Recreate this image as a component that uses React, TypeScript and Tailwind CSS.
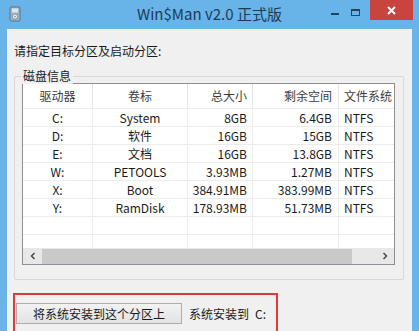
import React from "react";

type Disk = {
  drive: string
  label: string
  size: string
  free: string
  fs: string
};

const disks: Disk[] = [
  { drive: "C:", label: "System", size: "8GB", free: "6.4GB", fs: "NTFS" },
  { drive: "D:", label: "软件", size: "16GB", free: "15GB", fs: "NTFS" },
  { drive: "E:", label: "文档", size: "16GB", free: "13.8GB", fs: "NTFS" },
  { drive: "W:", label: "PETOOLS", size: "3.93MB", free: "1.27MB", fs: "NTFS" },
  { drive: "X:", label: "Boot", size: "384.91MB", free: "383.99MB", fs: "NTFS" },
  { drive: "Y:", label: "RamDisk", size: "178.93MB", free: "51.73MB", fs: "NTFS" },
];

const font = { fontFamily: '"Noto Sans CJK SC", "Noto Sans", sans-serif' };

// column widths: 驱动器 / 卷标 / 总大小 / 剩余空间 / 文件系统
const cols = "grid grid-cols-[70px_95px_65px_86px_72px]";

function AppIcon() {
  return (
    <svg width="12" height="16" viewBox="0 0 12 16">
      <rect x="1" y="1" width="10" height="14" rx="1" fill="#9fb4c6" stroke="#5d7488" />
      <rect x="3" y="2.5" width="6" height="4" fill="#dbe7f1" />
      <circle cx="6" cy="10.5" r="2.6" fill="#e9eef3" stroke="#6d8397" strokeWidth="0.8" />
      <circle cx="6" cy="10.5" r="0.8" fill="#6d8397" />
    </svg>
  );
}

function DiskRow({ d }: { d?: Disk }) {
  return (
    <div className={`${cols} h-[18px] border-b border-[#ececec] text-[12px] leading-[17px] text-[#1a1a1a]`}>
      <div className="text-center border-r border-[#ececec]">{d?.drive}</div>
      <div className="text-center border-r border-[#ececec]">{d?.label}</div>
      <div className="text-right pr-[5px] border-r border-[#ececec] whitespace-nowrap">{d?.size}</div>
      <div className="text-right pr-[6px] border-r border-[#ececec] whitespace-nowrap">{d?.free}</div>
      <div className="pl-[5px]">{d?.fs}</div>
    </div>
  );
}

export default function App() {
  return (
    <div className="w-[419px] h-[331px] overflow-hidden bg-[#68b3e7] flex flex-col" style={font}>
      {/* title bar */}
      <div className="h-[29px] shrink-0 grid grid-cols-[1fr_auto_1fr]">
        <div className="pl-[9px] pt-[6px]">
          <AppIcon />
        </div>
        <div className="text-[15px] leading-[29px] text-[#1f3b56] -translate-y-[1px]">Win$Man v2.0 正式版</div>
        <div className="flex justify-end items-start">
          <div className="w-[8px] h-[2px] bg-[#2a4258] mt-[13px] mr-[12px]" />
          <div className="w-[9px] h-[7px] border border-[#2a4258] border-t-2 mt-[9px] mr-[10px]" />
          <div className="w-[43px] h-[20px] mr-[6px] bg-[#c9443f] flex items-center justify-center">
            <svg width="9" height="9" viewBox="0 0 9 9">
              <path d="M1 1 L8 8 M8 1 L1 8" stroke="#ffffff" strokeWidth="1.8" />
            </svg>
          </div>
        </div>
      </div>

      {/* client area */}
      <div className="ml-[7px] w-[405px] flex-1 bg-[#f0f0f0] flex flex-col pt-[15px] text-[#1a1a1a]">
        <div className="pl-[7px] text-[12px] leading-[14px]">请指定目标分区及启动分区:</div>

        {/* group box */}
        <div className="relative ml-[7px] mt-[18px] w-[390px] h-[204px] border border-[#d8d8d8] rounded-[2px] pt-[6px] pl-[7px]">
          <div className="absolute -top-[9px] left-[6px] px-[2px] bg-[#f0f0f0] text-[12px] leading-[16px]">磁盘信息</div>

          {/* list view */}
          <div className="w-[373px] h-[182px] border border-[#8e8f92] bg-white flex flex-col overflow-hidden">
            <div className="flex-1 overflow-hidden">
              <div className={`${cols} h-[25px] text-[12px] leading-[24px] text-[#3c3c3c] border-b border-[#ececec]`}>
                <div className="text-center border-r border-[#e5e5e5]">驱动器</div>
                <div className="text-center border-r border-[#e5e5e5]">卷标</div>
                <div className="text-right pr-[5px] border-r border-[#e5e5e5]">总大小</div>
                <div className="text-right pr-[6px] border-r border-[#e5e5e5]">剩余空间</div>
                <div className="pl-[5px] whitespace-nowrap">文件系统</div>
              </div>
              {disks.map((d) => (
                <DiskRow key={d.drive} d={d} />
              ))}
              <DiskRow />
              <DiskRow />
            </div>

            {/* horizontal scrollbar */}
            <div className="h-[16px] shrink-0 bg-[#e8e8e8] flex items-center">
              <div className="w-[19px] flex justify-center">
                <svg width="6" height="8" viewBox="0 0 6 8">
                  <path d="M4.5 1 L1.5 4 L4.5 7" stroke="#404040" strokeWidth="1.4" fill="none" />
                </svg>
              </div>
              <div className="w-[310px] h-[15px] bg-[#c9c9c9]" />
              <div className="flex-1 flex justify-end pr-[6px]">
                <svg width="6" height="8" viewBox="0 0 6 8">
                  <path d="M1.5 1 L4.5 4 L1.5 7" stroke="#404040" strokeWidth="1.4" fill="none" />
                </svg>
              </div>
            </div>
          </div>
        </div>

        {/* install target (highlighted) */}
        <div className="ml-[6px] mt-[13px] w-[265px] h-[60px] border-2 border-[#de3a3c] pt-[8px] pl-[1px] flex items-start">
          <button className="w-[166px] h-[21px] border border-[#adadad] bg-gradient-to-b from-[#f2f2f2] to-[#e3e3e3] text-[12px] leading-[19px] text-[#1a1a1a]">
            将系统安装到这个分区上
          </button>
          <div className="ml-[7px] text-[12px] leading-[21px]">系统安装到</div>
          <div className="ml-[6px] text-[12px] leading-[21px]">C:</div>
        </div>
      </div>
    </div>
  );
}
